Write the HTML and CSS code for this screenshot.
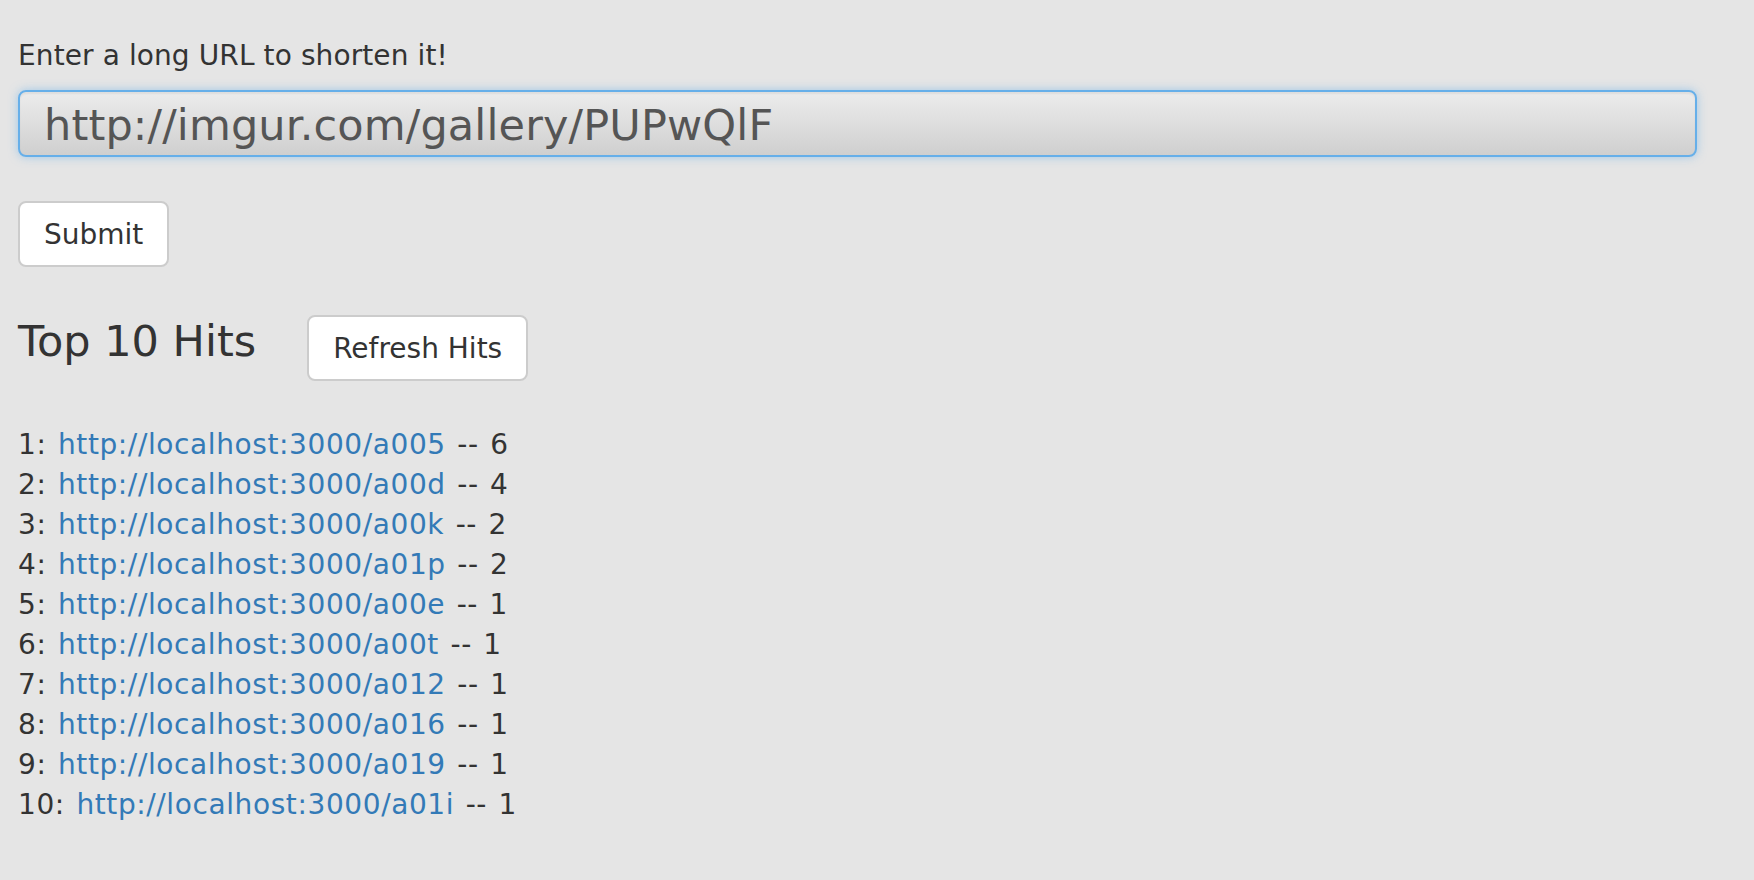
FILE: index.html
```html
<!DOCTYPE html>
<html lang="en">
<head>
<meta charset="utf-8">
<title>URL Shortener</title>
<link rel="stylesheet" href="styles.css">
</head>
<body>
<main class="page">
  <form class="shorten">
    <label class="prompt" for="url">Enter a long URL to shorten it!</label>
    <input id="url" class="url-input" type="text" value="http://imgur.com/gallery/PUPwQlF">
    <button type="button" class="btn btn-submit">Submit</button>
  </form>
  <section class="hits">
    <div class="hits-head">
      <h2 class="hits-title">Top 10 Hits</h2>
      <button type="button" class="btn">Refresh Hits</button>
    </div>
    <ul class="hit-list">
      <li>1: <a href="#">http://localhost:3000/a005</a> -- 6</li>
      <li>2: <a href="#">http://localhost:3000/a00d</a> -- 4</li>
      <li>3: <a href="#">http://localhost:3000/a00k</a> -- 2</li>
      <li>4: <a href="#">http://localhost:3000/a01p</a> -- 2</li>
      <li>5: <a href="#">http://localhost:3000/a00e</a> -- 1</li>
      <li>6: <a href="#">http://localhost:3000/a00t</a> -- 1</li>
      <li>7: <a href="#">http://localhost:3000/a012</a> -- 1</li>
      <li>8: <a href="#">http://localhost:3000/a016</a> -- 1</li>
      <li>9: <a href="#">http://localhost:3000/a019</a> -- 1</li>
      <li>10: <a href="#">http://localhost:3000/a01i</a> -- 1</li>
    </ul>
  </section>
</main>
</body>
</html>
```

FILE: styles.css
```css
html, body {
  margin: 0;
  padding: 0;
  background: #e5e5e5;
}

body {
  font-family: "DejaVu Sans", Verdana, sans-serif;
  font-size: 28px;
  line-height: 40px;
  color: #333333;
}

.page {
  padding: 36px 18px 40px 18px;
}

.shorten {
  display: flex;
  flex-direction: column;
  align-items: flex-start;
  margin: 0;
}

.prompt {
  display: block;
  font-size: 28px;
  line-height: 40px;
  font-weight: normal;
  letter-spacing: 0.1px;
  color: #333333;
}

.url-input {
  display: block;
  box-sizing: border-box;
  width: 1679px;
  height: 67px;
  margin: 14px 0 0 0;
  padding: 3px 24px 0 24px;
  font-family: "DejaVu Sans", Verdana, sans-serif;
  font-size: 43px;
  letter-spacing: 0.15px;
  color: #555555;
  background: linear-gradient(to bottom, #ececec 0%, #dedede 50%, #cfcfcf 100%);
  border: 2px solid #66afe9;
  border-radius: 8px;
  box-shadow: inset 0 2px 2px rgba(0, 0, 0, 0.06), 0 0 10px rgba(102, 175, 233, 0.55);
  outline: none;
}

.btn {
  box-sizing: border-box;
  margin: 0;
  padding: 12px 24px 10px 24px;
  font-family: "DejaVu Sans", Verdana, sans-serif;
  font-size: 28px;
  line-height: 40px;
  color: #333333;
  background: #ffffff;
  border: 2px solid #cccccc;
  border-radius: 8px;
  cursor: pointer;
}

.btn-submit {
  margin-top: 44px;
}

.hits {
  margin-top: 48px;
}

.hits-head {
  display: flex;
  align-items: flex-start;
  gap: 51px;
}

.hits-title {
  margin: 3px 0 0 0;
  font-size: 43px;
  line-height: 46px;
  font-weight: normal;
  color: #333333;
}

.hit-list {
  list-style: none;
  margin: 44px 0 0 0;
  padding: 0;
  letter-spacing: 0.6px;
  word-spacing: 2px;
}

.hit-list li {
  line-height: 40px;
}

.hit-list a {
  color: #337ab7;
  text-decoration: none;
}
```
